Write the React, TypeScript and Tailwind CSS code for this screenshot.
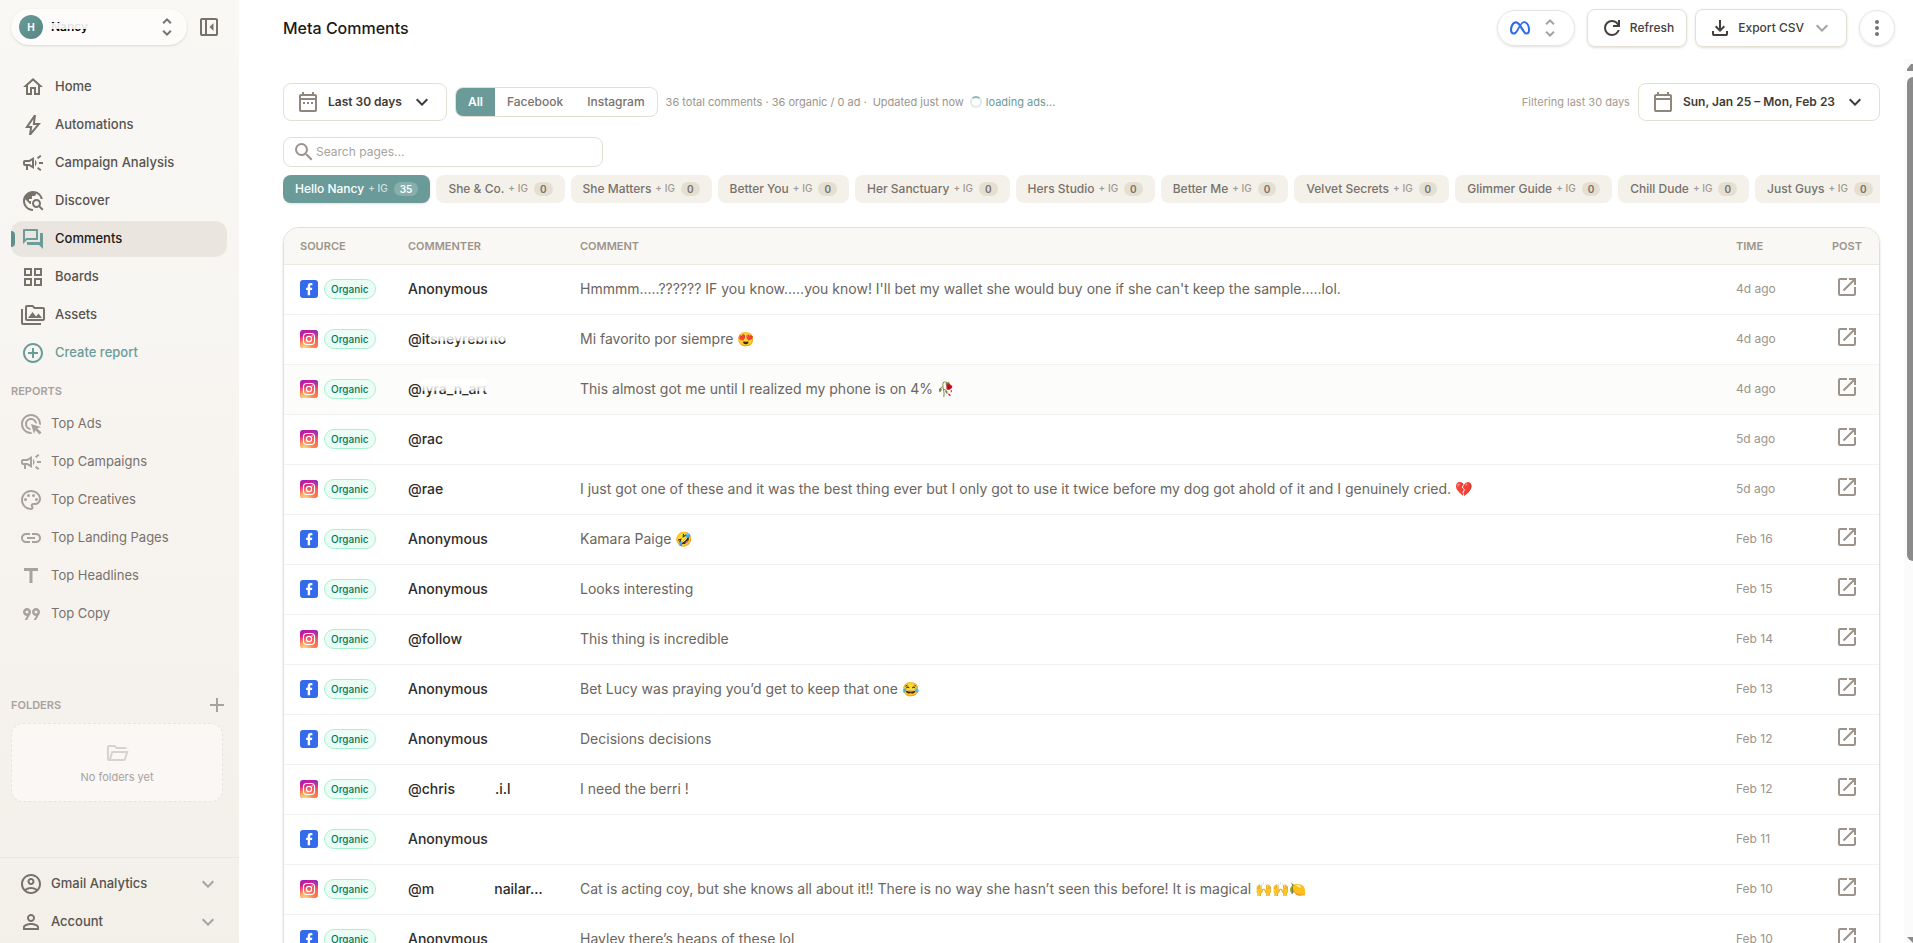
import { useState } from "react";
import type { ReactNode } from "react";
import clsx from "clsx";
import { FaMeta } from "react-icons/fa6";
import {
  MdAdd,
  MdAddCircleOutline,
  MdExpandMore,
  MdLink,
  MdMoreVert,
  MdOpenInNew,
  MdOutlineAccountCircle,
  MdOutlineAdsClick,
  MdOutlineCampaign,
  MdOutlineForum,
  MdOutlineGridView,
  MdOutlineHome,
  MdOutlinePalette,
  MdOutlinePermMedia,
  MdOutlineTravelExplore,
  MdPersonOutline,
  MdSearch,
  MdTitle,
  MdUnfoldMore,
} from "react-icons/md";

const ICON_PATHS = {
  bolt: "m10.55 18.2 5.175-6.2h-4l.725-5.675L7.825 13H11.3l-.75 5.2ZM8 22l1-7H4l9-13h2l-1 8h6L10 22H8Z",
  quote:
    "m5.7 18 2.3-4q-1.65 0-2.825-1.175T4 10q0-1.65 1.175-2.825T8 6q1.65 0 2.825 1.175T12 10q0 .575-.137 1.063T11.45 12L8 18zm9 0 2.3-4q-1.65 0-2.825-1.175T13 10q0-1.65 1.175-2.825T17 6q1.65 0 2.825 1.175T21 10q0 .575-.137 1.063T20.45 12L17 18zM8 11.5q.625 0 1.063-.437T9.5 10q0-.625-.437-1.062T8 8.5q-.625 0-1.062.438T6.500 10q0 .625.438 1.063T8 11.500m9 0q.625 0 1.063-.437T18.500 10q0-.625-.437-1.062T17 8.500q-.625 0-1.062.438T15.500 10q0 .625.438 1.063T17 11.500",
  panelClose:
    "M16.5 16V8l-4 4zM5 21q-.825 0-1.412-.587T3 19V5q0-.825.588-1.412T5 3h14q.825 0 1.413.588T21 5v14q0 .825-.587 1.413T19 21zm3-2V5H5v14zm2 0h9V5h-9z",
  calendar:
    "M5 22q-.825 0-1.412-.587T3 20V6q0-.825.588-1.412T5 4h1V2h2v2h8V2h2v2h1q.825 0 1.413.588T21 6v14q0 .825-.587 1.413T19 22zm0-2h14V10H5zM5 8h14V6H5z",
  dateRange:
    "M5 22q-.825 0-1.412-.587T3 20V6q0-.825.588-1.412T5 4h1V2h2v2h8V2h2v2h1q.825 0 1.413.588T21 6v14q0 .825-.587 1.413T19 22zm0-2h14V10H5zM5 8h14V6H5zM7 12h2v2H7zm4 0h2v2h-2zm4 0h2v2h-2z",
  refresh:
    "M12 20q-3.350 0-5.675-2.325T4 12t2.325-5.675T12 4q1.725 0 3.300.713T18 6.750V4h2v7h-7V9h4.200q-.8-1.400-2.187-2.200T12 6Q9.500 6 7.750 7.750T6 12t1.750 4.250T12 18q1.925 0 3.475-1.100T17.650 14h2.100q-.7 2.650-2.850 4.325T12 20",
  download:
    "m12 16-5-5 1.400-1.450 2.600 2.600V4h2v8.150l2.600-2.600L17 11zm-6 4q-.825 0-1.412-.587T4 18v-3h2v3h12v-3h2v3q0 .825-.587 1.413T18 20z",
  folderOpen:
    "M4 20q-.825 0-1.412-.587T2 18V6q0-.825.588-1.412T4 4h6l2 2h8q.825 0 1.413.588T22 8H11.175l-2-2H4v12l2.400-8h17.100l-2.575 8.575q-.2.650-.737 1.038T19 20zm2.100-2H19l1.800-6H7.900z",
};

function Icon({ name }: { name: keyof typeof ICON_PATHS }) {
  return (
    <svg viewBox="0 0 24 24" width="24" height="24" fill="currentColor" className="shrink-0">
      <path d={ICON_PATHS[name]} />
    </svg>
  );
}

const FacebookIcon = () => (
  <svg viewBox="0 0 18 18" width="18" height="18">
    <rect width="18" height="18" rx="3" fill="#336bea" />
    <path
      fill="#fff"
      d="M7.700 15.200V9.900H6.100V7.700h1.600V6.300c0-2.100 1-3.300 3.200-3.300.7 0 1.200.1 1.500.2v2h-1.100c-.9 0-1.200.4-1.200 1.200v1.300h2.200l-.3 2.200h-1.900v5.300z"
    />
  </svg>
);

const InstagramIcon = () => (
  <svg viewBox="0 0 18 18" width="18" height="18" fill="none">
    <defs>
      <linearGradient id="igBase" x1=".15" y1="0" x2=".6" y2="1">
        <stop offset="0" stopColor="#a31fb8" />
        <stop offset=".25" stopColor="#d41c93" />
        <stop offset=".55" stopColor="#f5465c" />
        <stop offset="1" stopColor="#fb7a4c" />
      </linearGradient>
      <radialGradient id="igWarm" cx=".25" cy="1.050" r=".75">
        <stop offset="0" stopColor="#ffe08a" />
        <stop offset=".4" stopColor="#ffb865" stopOpacity=".85" />
        <stop offset="1" stopColor="#ff6a4c" stopOpacity="0" />
      </radialGradient>
      <radialGradient id="igCool" cx="1" cy="0" r=".55">
        <stop offset="0" stopColor="#5b3fdc" />
        <stop offset="1" stopColor="#b01fb0" stopOpacity="0" />
      </radialGradient>
    </defs>
    <rect width="18" height="18" rx="3" fill="url(#igBase)" />
    <rect width="18" height="18" rx="3" fill="url(#igWarm)" />
    <rect width="18" height="18" rx="3" fill="url(#igCool)" />
    <rect x="3.500" y="3.500" width="11" height="11" rx="3.200" stroke="#fff" strokeWidth="1.200" />
    <circle cx="9" cy="9" r="2.600" stroke="#fff" strokeWidth="1.200" />
    <circle cx="12.100" cy="5.900" r=".7" fill="#fff" />
  </svg>
);

const NAV = [
  { label: "Home", icon: <MdOutlineHome size={24} /> },
  { label: "Automations", icon: <Icon name="bolt" /> },
  { label: "Campaign Analysis", icon: <MdOutlineCampaign size={24} /> },
  { label: "Discover", icon: <MdOutlineTravelExplore size={24} /> },
  { label: "Comments", icon: <MdOutlineForum size={24} /> },
  { label: "Boards", icon: <MdOutlineGridView size={24} /> },
  { label: "Assets", icon: <MdOutlinePermMedia size={24} /> },
  { label: "Create report", icon: <MdAddCircleOutline size={24} /> },
];

const REPORTS = [
  { label: "Top Ads", icon: <MdOutlineAdsClick size={24} /> },
  { label: "Top Campaigns", icon: <MdOutlineCampaign size={24} /> },
  { label: "Top Creatives", icon: <MdOutlinePalette size={24} /> },
  { label: "Top Landing Pages", icon: <MdLink size={24} /> },
  { label: "Top Headlines", icon: <MdTitle size={24} /> },
  { label: "Top Copy", icon: <Icon name="quote" /> },
];

const PAGES = [
  { name: "Hello Nancy", count: 35 },
  { name: "She & Co.", count: 0 },
  { name: "She Matters", count: 0 },
  { name: "Better You", count: 0 },
  { name: "Her Sanctuary", count: 0 },
  { name: "Hers Studio", count: 0 },
  { name: "Better Me", count: 0 },
  { name: "Velvet Secrets", count: 0 },
  { name: "Glimmer Guide", count: 0 },
  { name: "Chill Dude", count: 0 },
  { name: "Just Guys", count: 0 },
];

// partly wiped-out text: a faint upper half over a readable baseline
function Smudged({ children }: { children: ReactNode }) {
  return (
    <span className="relative inline-block">
      {children}
      <span className="absolute inset-x-0 top-0 h-3 bg-linear-to-b from-white via-white to-white/60" />
    </span>
  );
}

type Comment = { source: "fb" | "ig"; who: ReactNode; text: string; time: string; hover?: boolean };

const COMMENTS: Comment[] = [
  { source: "fb", who: "Anonymous", text: "Hmmmm.....?????? IF you know.....you know! I'll bet my wallet she would buy one if she can't keep the sample.....lol.", time: "4d ago" },
  { source: "ig", who: <>@it<Smudged>sneyrebrito</Smudged></>, text: "Mi favorito por siempre 😍", time: "4d ago" },
  { source: "ig", who: <>@<Smudged>lyra_n_art</Smudged></>, text: "This almost got me until I realized my phone is on 4% 🥀", time: "4d ago", hover: true },
  { source: "ig", who: "@rac", text: "", time: "5d ago" },
  { source: "ig", who: "@rae", text: "I just got one of these and it was the best thing ever but I only got to use it twice before my dog got ahold of it and I genuinely cried. 💔", time: "5d ago" },
  { source: "fb", who: "Anonymous", text: "Kamara Paige 🤣", time: "Feb 16" },
  { source: "fb", who: "Anonymous", text: "Looks interesting", time: "Feb 15" },
  { source: "ig", who: "@follow", text: "This thing is incredible", time: "Feb 14" },
  { source: "fb", who: "Anonymous", text: "Bet Lucy was praying you’d get to keep that one 😂", time: "Feb 13" },
  { source: "fb", who: "Anonymous", text: "Decisions decisions", time: "Feb 12" },
  { source: "ig", who: <>@chris<span className="inline-block w-10" />.i.l</>, text: "I need the berri !", time: "Feb 12" },
  { source: "fb", who: "Anonymous", text: "", time: "Feb 11" },
  { source: "ig", who: <>@m<span className="inline-block w-15" />nailar...</>, text: "Cat is acting coy, but she knows all about it!! There is no way she hasn’t seen this before! It is magical 🙌🙌🍋", time: "Feb 10" },
  { source: "fb", who: "Anonymous", text: "Hayley there’s heaps of these lol", time: "Feb 10" },
];

function Sidebar() {
  return (
    <aside className="flex w-[239px] shrink-0 flex-col bg-linear-to-b from-[#f9f8f5] via-[#f7f4f0] to-[#f3f0ea]">
      <div className="flex items-center px-[11px] pt-[9px]">
        <button className="flex h-9 w-44 items-center rounded-full bg-[#fdfcfb] px-2 shadow-sm">
          <span className="flex size-6 items-center justify-center rounded-full bg-linear-to-br from-[#6a9b99] to-[#578583] text-[10px] font-bold text-white">
            H
          </span>
          <span className="ml-2 flex-1 text-left text-xs font-semibold text-black">
            <span className="relative inline-block">
              Nancy
              <span className="absolute inset-x-0 top-1 h-1.5 bg-[#fdfcfb]/90" />
            </span>
          </span>
          <MdUnfoldMore size={24} className="text-[#78716c]" />
        </button>
        <button aria-label="Collapse sidebar" className="ml-2.5 text-[#78716c]">
          <Icon name="panelClose" />
        </button>
      </div>

      <nav className="mt-6 flex flex-col gap-0.5 pr-3 pl-[11px]">
        {NAV.map(({ label, icon }) => {
          const active = label === "Comments";
          const create = label === "Create report";
          return (
            <a
              key={label}
              href="#"
              className={clsx(
                "relative flex h-9 items-center gap-2.5 rounded-xl pl-2.5 text-[13px] font-medium",
                active && "bg-[#eae5df] text-[#1c1917]",
                create && "text-[#6a9c99]",
                !active && !create && "text-[#57534e]",
              )}
            >
              {active && <span className="absolute left-0 h-4 w-1 rounded-r-full bg-[#5f908e]" />}
              <span className={active || create ? "text-[#6a9c99]" : "text-[#78716c]"}>{icon}</span>
              {label}
            </a>
          );
        })}
      </nav>

      <h2 className="mt-3 px-[11px] text-[11px] leading-4 font-semibold text-[#a8a29e]">REPORTS</h2>
      <nav className="mt-[7px] flex flex-col gap-0.5 px-[11px]">
        {REPORTS.map(({ label, icon }) => (
          <a key={label} href="#" className="flex h-9 items-center gap-2 pl-2 text-[13px] text-[#78716c]">
            <span className="text-[#a8a29e]">{icon}</span>
            {label}
          </a>
        ))}
      </nav>

      <div className="mt-[61px] flex items-center justify-between pr-2.5 pl-[11px]">
        <h2 className="text-[11px] leading-4 font-semibold text-[#a8a29e]">FOLDERS</h2>
        <button aria-label="New folder" className="text-[#a8a29e]">
          <MdAdd size={24} />
        </button>
      </div>
      <div className="mt-1.5 mr-4 ml-[11px] flex h-[79px] flex-col items-center justify-center gap-1 rounded-xl border border-dashed border-[#e7e3df] bg-[#faf7f4] text-[11px] leading-4 text-[#a8a29e]">
        <span className="text-[#d6d3d1]">
          <Icon name="folderOpen" />
        </span>
        No folders yet
      </div>

      <div className="mt-auto flex flex-col gap-0.5 border-t border-[#e9e5e0] px-[11px] pt-2 pb-[3px]">
        <button className="flex h-9 items-center gap-2 px-2 text-[13px] font-medium text-[#57534e]">
          <MdOutlineAccountCircle size={24} className="text-[#78716c]" />
          <span className="flex-1 text-left">Gmail Analytics</span>
          <MdExpandMore size={24} className="text-[#a8a29e]" />
        </button>
        <button className="flex h-9 items-center gap-2 px-2 text-[13px] font-medium text-[#57534e]">
          <MdPersonOutline size={24} className="text-[#78716c]" />
          <span className="flex-1 text-left">Account</span>
          <MdExpandMore size={24} className="text-[#a8a29e]" />
        </button>
      </div>
    </aside>
  );
}

function Header() {
  return (
    <header className="flex h-14 shrink-0 items-center pr-[18px] pl-11">
      <h1 className="flex-1 text-base font-medium text-[#1c1917]">Meta Comments</h1>
      <button
        aria-label="Switch platform"
        className="mr-3 flex h-9 items-center gap-2 rounded-full border border-[#e7e5e4] px-3 shadow-sm"
      >
        <FaMeta size={20} className="text-[#2f6ae8]" />
        <MdUnfoldMore size={24} className="text-[#a8a29e]" />
      </button>
      <button className="mr-2 flex h-[38px] items-center gap-1.5 rounded-lg border border-[#e4dfd3] px-3 text-xs font-medium text-[#44403c] shadow-sm">
        <Icon name="refresh" />
        Refresh
      </button>
      <button className="mr-3 flex h-[38px] items-center gap-1.5 rounded-lg border border-[#e4dfd3] px-3 text-xs font-medium text-[#44403c] shadow-sm">
        <Icon name="download" />
        Export CSV
        <MdExpandMore size={24} className="text-[#a8a29e]" />
      </button>
      <button
        aria-label="More options"
        className="flex size-9 items-center justify-center rounded-full border border-[#e7e5e4] text-[#78716c] shadow-sm"
      >
        <MdMoreVert size={24} />
      </button>
    </header>
  );
}

function Filters({ page, onPage }: { page: string; onPage: (name: string) => void }) {
  const [channel, setChannel] = useState("All");

  return (
    <>
      <div className="flex items-center gap-2">
        <button className="flex h-[38px] items-center gap-2 rounded-lg border border-[#e4dfd3] px-3 text-xs font-semibold text-[#3f3b36]">
          <span className="text-[#8f877e]">
            <Icon name="dateRange" />
          </span>
          Last 30 days
          <MdExpandMore size={24} />
        </button>
        <div className="flex h-[30px] overflow-hidden rounded-lg border border-[#e4dfd3] text-xs font-medium">
          {["All", "Facebook", "Instagram"].map((c) => (
            <button
              key={c}
              onClick={() => setChannel(c)}
              className={clsx("px-3", channel === c ? "bg-[#6a9b99] font-semibold text-white" : "text-[#78716c]")}
            >
              {c}
            </button>
          ))}
        </div>
        <p className="flex items-center text-[11px] text-[#9c948b]">
          <span>36 total comments · 36 organic / 0 ad ·</span>
          <span className="ml-1.5">Updated just now</span>
          <span className="mr-1 ml-1.5 size-3 rounded-full border-2 border-[#dfeae9] border-t-[#8fb5b3]" />
          <span className="text-[#6a9b99]">loading ads...</span>
        </p>
        <span className="ml-auto text-[11px] text-[#a39b92]">Filtering last 30 days</span>
        <button className="flex h-[38px] items-center gap-2 rounded-lg border border-[#e4dfd3] px-3 text-xs font-semibold text-[#3f3b36]">
          <span className="text-[#8f877e]">
            <Icon name="calendar" />
          </span>
          Sun, Jan 25 – Mon, Feb 23
          <MdExpandMore size={24} />
        </button>
      </div>

      <label className="mt-4 flex h-[30px] w-80 items-center rounded-lg border border-[#e4dfd3] pl-2">
        <MdSearch size={24} className="text-[#9c948b]" />
        <input
          type="text"
          aria-label="Search pages"
          placeholder="Search pages..."
          className="min-w-0 flex-1 bg-transparent text-xs outline-none placeholder:text-[#a8a29e]"
        />
      </label>

      <div className="mt-2 flex gap-1.5 overflow-hidden pb-1">
        {PAGES.map(({ name, count }) => {
          const active = page === name;
          return (
            <button
              key={name}
              onClick={() => onPage(name)}
              className={clsx(
                "flex h-7 shrink-0 items-center rounded-lg px-3 text-xs font-medium",
                active ? "bg-[#6a9b99] text-white shadow-sm" : "bg-[#f4f1ea] text-[#78716c]",
              )}
            >
              {name}
              <span className="ml-1 text-[10px] opacity-70">+ IG</span>
              <span
                className={clsx(
                  "ml-1.5 rounded-full px-1.5 text-[10px] leading-[14px] font-semibold",
                  active ? "bg-white/20" : "bg-[#e4dfd0]",
                )}
              >
                {count}
              </span>
            </button>
          );
        })}
      </div>
    </>
  );
}

function CommentsTable() {
  return (
    <div className="mt-5 overflow-hidden rounded-2xl border border-[#e4dfd3] shadow-sm">
      <table className="w-full table-fixed text-left">
        <thead>
          <tr className="h-9 border-b border-[#edeae3] bg-[#f9f8f4] text-[11px] text-[#9c948b]">
            <th className="w-[108px] px-4 font-semibold">SOURCE</th>
            <th className="w-[172px] px-4 font-semibold">COMMENTER</th>
            <th className="px-4 font-semibold">COMMENT</th>
            <th className="w-[95px] px-4 font-semibold">TIME</th>
            <th className="w-16 px-4 text-center font-semibold">POST</th>
          </tr>
        </thead>
        <tbody>
          {COMMENTS.map((c, i) => (
            <tr key={i} className={clsx("h-[50px] border-b border-[#f3f2ef]", c.hover && "bg-[#fcfcfa]")}>
              <td className="pl-4">
                <div className="flex items-center gap-1.5">
                  {c.source === "fb" ? <FacebookIcon /> : <InstagramIcon />}
                  <span className="flex h-5 items-center rounded-full border border-[#a7f3d0] bg-[#ecfdf5] px-1.5 text-[10px] font-medium text-[#047857]">
                    Organic
                  </span>
                </div>
              </td>
              <td className="px-4 text-sm font-medium whitespace-nowrap text-[#2f2b28]">{c.who}</td>
              <td className="truncate px-4 text-sm text-[#6b6560]">{c.text}</td>
              <td className="px-4 text-xs text-[#9c948b]">{c.time}</td>
              <td className="pb-1">
                <a href="#" aria-label="Open post" className="flex justify-center text-[#9c948b]">
                  <MdOpenInNew size={24} />
                </a>
              </td>
            </tr>
          ))}
        </tbody>
      </table>
    </div>
  );
}

export default function App() {
  const [page, setPage] = useState("Hello Nancy");

  return (
    <div className="flex h-screen overflow-hidden bg-white font-['Inter',sans-serif]">
      <Sidebar />
      <main className="flex min-w-0 flex-1 flex-col">
        <Header />
        <div className="mt-[3px] flex min-h-0 flex-1">
          <div className="min-w-0 flex-1 overflow-hidden pt-6 pr-6 pl-11">
            <Filters page={page} onPage={setPage} />
            <CommentsTable />
          </div>
          {/* scrollbar */}
          <div className="flex w-[9px] shrink-0 flex-col items-end overflow-hidden bg-[#fbfbfb]">
            <svg viewBox="0 0 6 18" width="6" height="18" fill="#8b8b8b">
              <path d="M0 10 4 5h2v7H0z" />
            </svg>
            <div className="h-[484px] w-1.5 rounded-l-md bg-[#8b8b8b]" />
            <svg viewBox="0 0 6 10" width="6" height="10" fill="#8b8b8b" className="mt-auto">
              <path d="M0 4h6v6z" />
            </svg>
          </div>
        </div>
      </main>
    </div>
  );
}
